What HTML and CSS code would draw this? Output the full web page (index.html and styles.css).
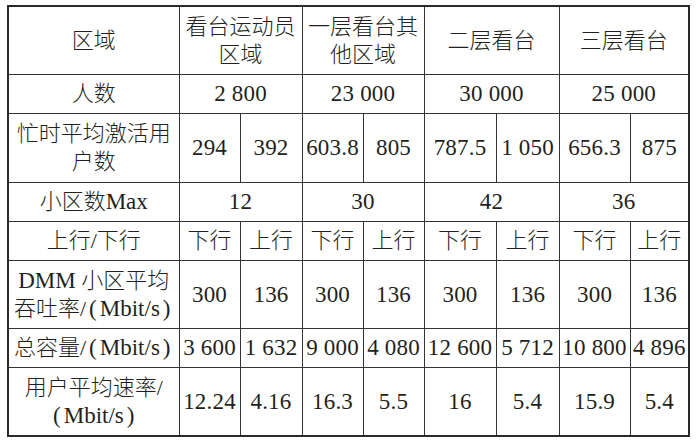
FILE: index.html
```html
<!DOCTYPE html>
<html lang="zh">
<head>
<meta charset="utf-8">
<link rel="stylesheet" href="styles.css">
</head>
<body>
<table class="tbl">
  <colgroup>
    <col class="c0"><col class="c1"><col class="c2"><col class="c3"><col class="c4"><col class="c5"><col class="c6"><col class="c7"><col class="c8">
  </colgroup>
  <tr class="r2l">
    <td>区域</td>
    <td colspan="2">看台运动员<br>区域</td>
    <td colspan="2">一层看台其<br>他区域</td>
    <td colspan="2">二层看台</td>
    <td colspan="2">三层看台</td>
  </tr>
  <tr class="r1l num">
    <td>人数</td>
    <td colspan="2">2 800</td>
    <td colspan="2">23 000</td>
    <td colspan="2">30 000</td>
    <td colspan="2">25 000</td>
  </tr>
  <tr class="r2l r2b num">
    <td>忙时平均激活用<br>户数</td>
    <td>294</td><td>392</td><td>603.8</td><td>805</td><td>787.5</td><td>1 050</td><td>656.3</td><td>875</td>
  </tr>
  <tr class="r1l num">
    <td>小区数<span class="l">Max</span></td>
    <td colspan="2">12</td>
    <td colspan="2">30</td>
    <td colspan="2">42</td>
    <td colspan="2">36</td>
  </tr>
  <tr class="r1l">
    <td>上行/下行</td>
    <td>下行</td><td>上行</td><td>下行</td><td>上行</td><td>下行</td><td>上行</td><td>下行</td><td>上行</td>
  </tr>
  <tr class="r2l num">
    <td><span class="l">DMM</span> 小区平均<br>吞吐率/<span class="l"><span class="p">(</span>Mbit/s<span class="p">)</span></span></td>
    <td>300</td><td>136</td><td>300</td><td>136</td><td>300</td><td>136</td><td>300</td><td>136</td>
  </tr>
  <tr class="r1l num">
    <td>总容量/<span class="l"><span class="p">(</span>Mbit/s<span class="p">)</span></span></td>
    <td>3 600</td><td>1 632</td><td>9 000</td><td>4 080</td><td>12 600</td><td>5 712</td><td>10 800</td><td>4 896</td>
  </tr>
  <tr class="r2l num">
    <td>用户平均速率/<br><span class="l"><span class="p">(</span>Mbit/s<span class="p">)</span></span></td>
    <td>12.24</td><td>4.16</td><td>16.3</td><td>5.5</td><td>16</td><td>5.4</td><td>15.9</td><td>5.4</td>
  </tr>
</table>
</body>
</html>
```

FILE: styles.css
```css
html, body {
  margin: 0;
  padding: 0;
  background: #ffffff;
}
body {
  padding: 5px 0 0 7px;
}
.tbl {
  border-collapse: collapse;
  table-layout: fixed;
  width: 681px;
  border: 2px solid #2a2a2a;
  font-family: "Liberation Serif", "Noto Sans CJK SC", serif;
  font-size: 22px;
  font-weight: 300;
  color: #231f20;
}
.tbl td {
  border: 1px solid #333333;
  padding: 0;
  text-align: center;
  vertical-align: middle;
  line-height: 28px;
  white-space: nowrap;
}
.num td + td {
  font-size: 23px;
  letter-spacing: 0.2px;
}
.l {
  font-size: 23px;
  line-height: 22px;
}
.c0 { width: 171px; }
.c1 { width: 61px; }
.c2 { width: 62px; }
.c3 { width: 61px; }
.c4 { width: 61px; }
.c5 { width: 72px; }
.c6 { width: 63px; }
.c7 { width: 71px; }
.c8 { width: 59px; }
.r2l td { height: 67px; }
.r2b td { height: 68px; }
.r1l td { height: 38px; }
.p {
  padding: 0 3px;
}
```
